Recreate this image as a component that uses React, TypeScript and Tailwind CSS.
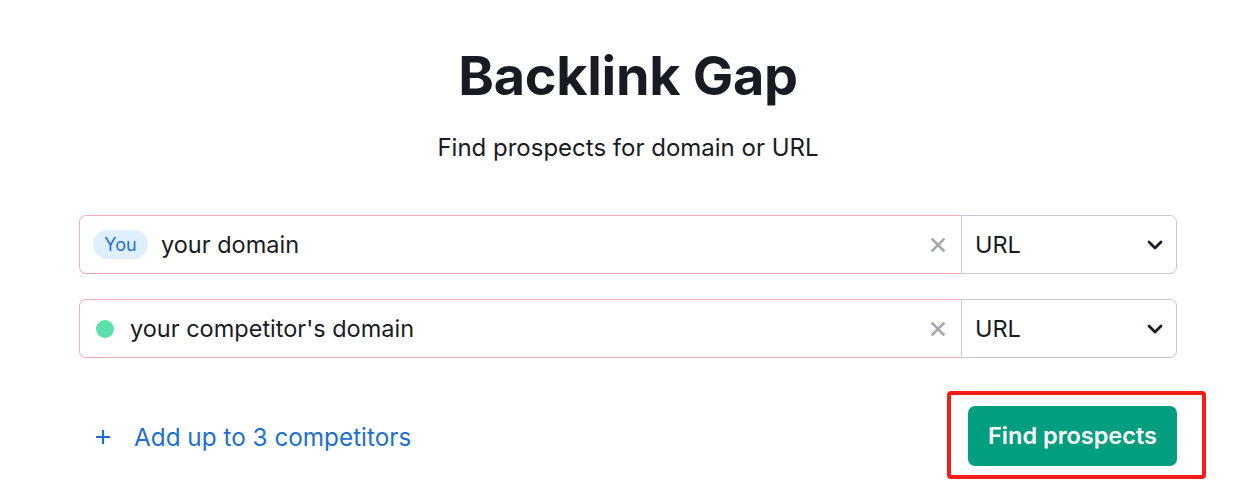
import React from 'react';

const font = { fontFamily: 'Inter, "Noto Sans", sans-serif' };

const ClearIcon = () => (
  <svg width="16" height="16" viewBox="0 0 16 16" className="text-[#a4a6b0]">
    <path d="M2.5 2.5 L13.5 13.5 M13.5 2.5 L2.5 13.5" stroke="currentColor" strokeWidth="2.6" strokeLinecap="square" />
  </svg>
);

const Chevron = () => (
  <svg width="16" height="10" viewBox="0 0 16 10" className="text-[#191b23]">
    <path d="M2 2 L8 8 L14 2" stroke="currentColor" strokeWidth="2.8" fill="none" strokeLinecap="round" strokeLinejoin="round" />
  </svg>
);

const PlusIcon = () => (
  <svg width="16" height="16" viewBox="0 0 16 16" className="text-[#1b6fd1]">
    <path d="M8 1 V15 M1 8 H15" stroke="currentColor" strokeWidth="2.2" />
  </svg>
);

type RowProps = { lead: React.ReactNode; placeholder: string };

const DomainRow: React.FC<RowProps> = ({ lead, placeholder }) => (
  <div className="flex h-[59px]">
    <div className="flex flex-1 items-center rounded-l-[7px] border border-r-0 border-[#f7b0b8] pl-[13px] pr-[15px]">
      {lead}
      <span className="flex-1 text-[23.5px] text-[#191b23]">{placeholder}</span>
      <ClearIcon />
    </div>
    <div className="flex w-[216px] items-center justify-between rounded-r-[7px] border border-[#c5c6d0] pl-[13px] pr-[13px]">
      <span className="text-[23.5px] text-[#191b23]">URL</span>
      <Chevron />
    </div>
  </div>
);

const App: React.FC = () => {
  return (
    <div className="h-[498px] w-[1250px] bg-white" style={font}>
      <div className="ml-[79px] w-[1098px] pt-[44px]">
        <h1 className="text-center text-[54px] font-bold leading-[64px] tracking-[-0.3px] text-[#191b23]">
          Backlink Gap
        </h1>
        <p className="mt-[24px] text-center text-[24px] leading-[32px] text-[#191b23]">
          Find prospects for domain or URL
        </p>

        <div className="mt-[51px] flex flex-col gap-[25px]">
          <DomainRow
            lead={
              <span className="mr-[13px] flex h-[29px] w-[55px] items-center justify-center rounded-full bg-[#e0efff] text-[18px] text-[#1f6fd0]">
                You
              </span>
            }
            placeholder="your domain"
          />
          <DomainRow
            lead={<span className="ml-[3px] mr-[16px] h-[18px] w-[18px] rounded-full bg-[#5bdfab]" />}
            placeholder="your competitor's domain"
          />
        </div>

        <div className="mt-[33px] flex items-center justify-between">
          <button className="ml-[16px] mt-[4px] flex items-center gap-[23px] text-[24.3px] text-[#1b6fd1]">
            <PlusIcon />
            Add up to 3 competitors
          </button>
          <div className="-mr-[29px] rounded-[4px] border-4 border-[#f51d17] pb-[9px] pl-[17px] pr-[25px] pt-[11px]">
            <button className="flex h-[60px] w-[209px] items-center justify-center rounded-[7px] bg-[#029e80] text-[23.5px] font-semibold text-white">
              Find prospects
            </button>
          </div>
        </div>
      </div>
    </div>
  );
};

export default App;
